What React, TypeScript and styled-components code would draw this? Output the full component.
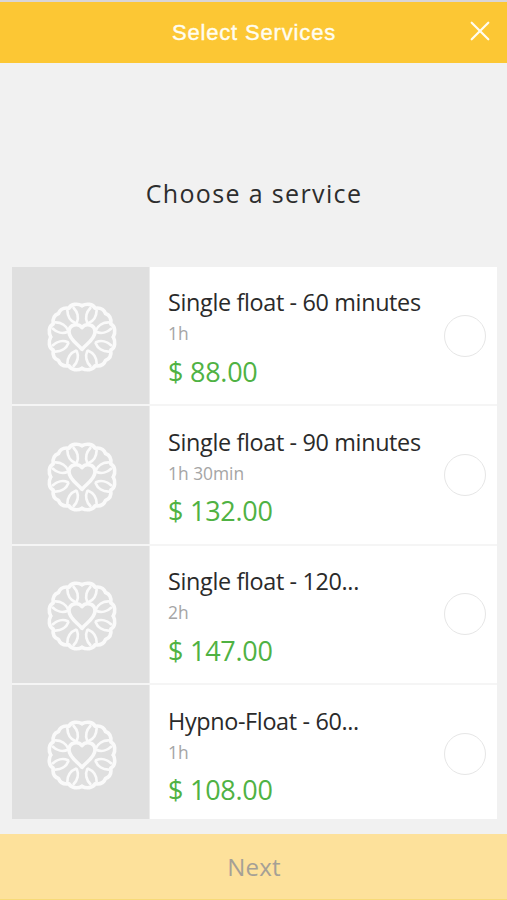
import React, { useState } from 'react';
import styled, { createGlobalStyle } from 'styled-components';

const GlobalStyle = createGlobalStyle`
  * { box-sizing: border-box; }
  body { margin: 0; background: #f1f1f1; font-family: "Open Sans", "Noto Sans", sans-serif; }
  button { font: inherit; border: 0; padding: 0; background: none; }
`;

const Screen = styled.main`
  height: 900px;
  display: flex;
  flex-direction: column;
  overflow: hidden;
  background: #f1f1f1;
`;

const Header = styled.header`
  height: 63px;
  flex: none;
  display: grid;
  grid-template-columns: 54px 1fr 54px;
  align-items: center;
  border-top: 2px solid #d9d5d6;
  background: #fcc734;
`;

const HeaderTitle = styled.h1`
  grid-column: 2;
  margin: 0;
  padding-left: 1px;
  text-align: center;
  font: 400 22px/30px "Liberation Sans", Arial, sans-serif;
  letter-spacing: 0.84px;
  color: #fffdf0;
  -webkit-text-stroke: 0.4px #fffdf0;
`;

const CloseButton = styled.button`
  width: 20px;
  height: 20px;
  justify-self: center;
  margin-bottom: 3px;

  svg { display: block; }
`;

const Heading = styled.h2`
  flex: none;
  height: 204px;
  margin: 0;
  padding: 112px 0 0 1px;
  text-align: center;
  font-size: 25px;
  line-height: 36px;
  font-weight: 400;
  letter-spacing: 1.35px;
  color: #2d2d2d;
`;

const ServiceList = styled.ul`
  flex: none;
  height: 552px;
  margin: 0 10px 15px 12px;
  padding: 0;
  overflow: hidden;
  list-style: none;
`;

const ServiceRow = styled.li`
  height: 139.4px;
  display: grid;
  grid-template-columns: 138px 1fr 42px;
  align-items: center;
  padding-right: 11px;
  border-bottom: 2px solid #f5f5f5;
  background: #fff;
`;

const Thumbnail = styled.div`
  height: 100%;
  display: flex;
  align-items: center;
  justify-content: center;
  border-right: 1px solid #ececec;
  background: #dfdfdf;

  svg { margin: 3px 0 0 2px; }
`;

const Details = styled.div`
  align-self: start;
  padding: 19.4px 0 0 18px;
  white-space: nowrap;
`;

const Name = styled.div`
  font-size: 23.4px;
  line-height: 32px;
  letter-spacing: -0.35px;
  color: #2a2a2a;
`;

const Duration = styled.div`
  font-size: 17.4px;
  line-height: 30px;
  color: #a5a5a5;
`;

const Price = styled.div`
  margin-top: -0.4px;
  font-size: 27px;
  line-height: 47px;
  letter-spacing: -0.25px;
  color: #4fb243;
`;

const Choice = styled.button<{ $selected: boolean }>`
  width: 42px;
  height: 42px;
  border: 1.5px solid #e6e6e6;
  border-radius: 50%;
  background: ${({ $selected }) => ($selected ? '#fcc734' : '#fff')};
`;

const NextButton = styled.button`
  && {
    flex: 1;
    padding-left: 1px;
    border-bottom: 1px solid #f7da78;
    background: #fde19b;
    font-size: 24px;
    letter-spacing: 0.2px;
    color: #a5a096;
  }
`;

const Flower = styled.svg`
  filter: blur(0.7px);
`;

const services = [
  { name: 'Single float - 60 minutes', duration: '1h', price: '$ 88.00' },
  { name: 'Single float - 90 minutes', duration: '1h 30min', price: '$ 132.00' },
  { name: 'Single float - 120...', duration: '2h', price: '$ 147.00' },
  { name: 'Hypno-Float - 60...', duration: '1h', price: '$ 108.00' },
];

const petals = Array.from({ length: 8 }, (_, i) => 22.5 + i * 45);
const quarters = [0, 90, 180, 270];

function FlowerLogo() {
  return (
    <Flower width="76" height="76" viewBox="-38 -38 76 76" fill="none" stroke="#fafafa" strokeLinejoin="round" strokeLinecap="round">
      {quarters.map((angle) => (
        <path
          key={angle}
          strokeWidth="3.6"
          transform={`rotate(${angle})`}
          d="M0 -31.3C4 -33.5 11 -33.5 13 -28.8C18 -29.5 22 -27.5 23.5 -23.5C27.5 -22 29.5 -18 28.8 -13C33.5 -11 33.5 -4 31.3 0"
        />
      ))}
      {petals.map((angle) => (
        <path
          key={angle}
          strokeWidth="2.7"
          transform={`rotate(${angle})`}
          d="M-0.5 -15C-4.8 -19 -5.4 -25 -3.4 -30M0.5 -15C4.8 -19 5.4 -25 3.4 -30"
        />
      ))}
      <path fill="#dfdfdf" strokeWidth="3.6" d="M0 12.4C-3.5 7.5 -13 2.5 -13 -5C-13 -13.2 -3.5 -13.8 0 -9.5C3.5 -13.8 13 -13.2 13 -5C13 2.5 3.5 7.5 0 12.4Z" />
    </Flower>
  );
}

export default function App() {
  const [selected, setSelected] = useState<string | null>(null);
  return (
    <Screen>
      <GlobalStyle />
      <Header>
        <HeaderTitle>Select Services</HeaderTitle>
        <CloseButton aria-label="Close">
          <svg width="20" height="20" viewBox="0 0 20 20" stroke="#fffdf0" strokeWidth="2.2" strokeLinecap="round">
            <path d="M1.7 1.7L18.3 18.3M18.3 1.7L1.7 18.3" />
          </svg>
        </CloseButton>
      </Header>
      <Heading>Choose a service</Heading>
      <ServiceList>
        {services.map((service) => (
          <ServiceRow key={service.name}>
            <Thumbnail><FlowerLogo /></Thumbnail>
            <Details>
              <Name>{service.name}</Name>
              <Duration>{service.duration}</Duration>
              <Price>{service.price}</Price>
            </Details>
            <Choice
              aria-label={service.name}
              $selected={selected === service.name}
              onClick={() => setSelected(service.name)}
            />
          </ServiceRow>
        ))}
      </ServiceList>
      <NextButton>Next</NextButton>
    </Screen>
  );
}
